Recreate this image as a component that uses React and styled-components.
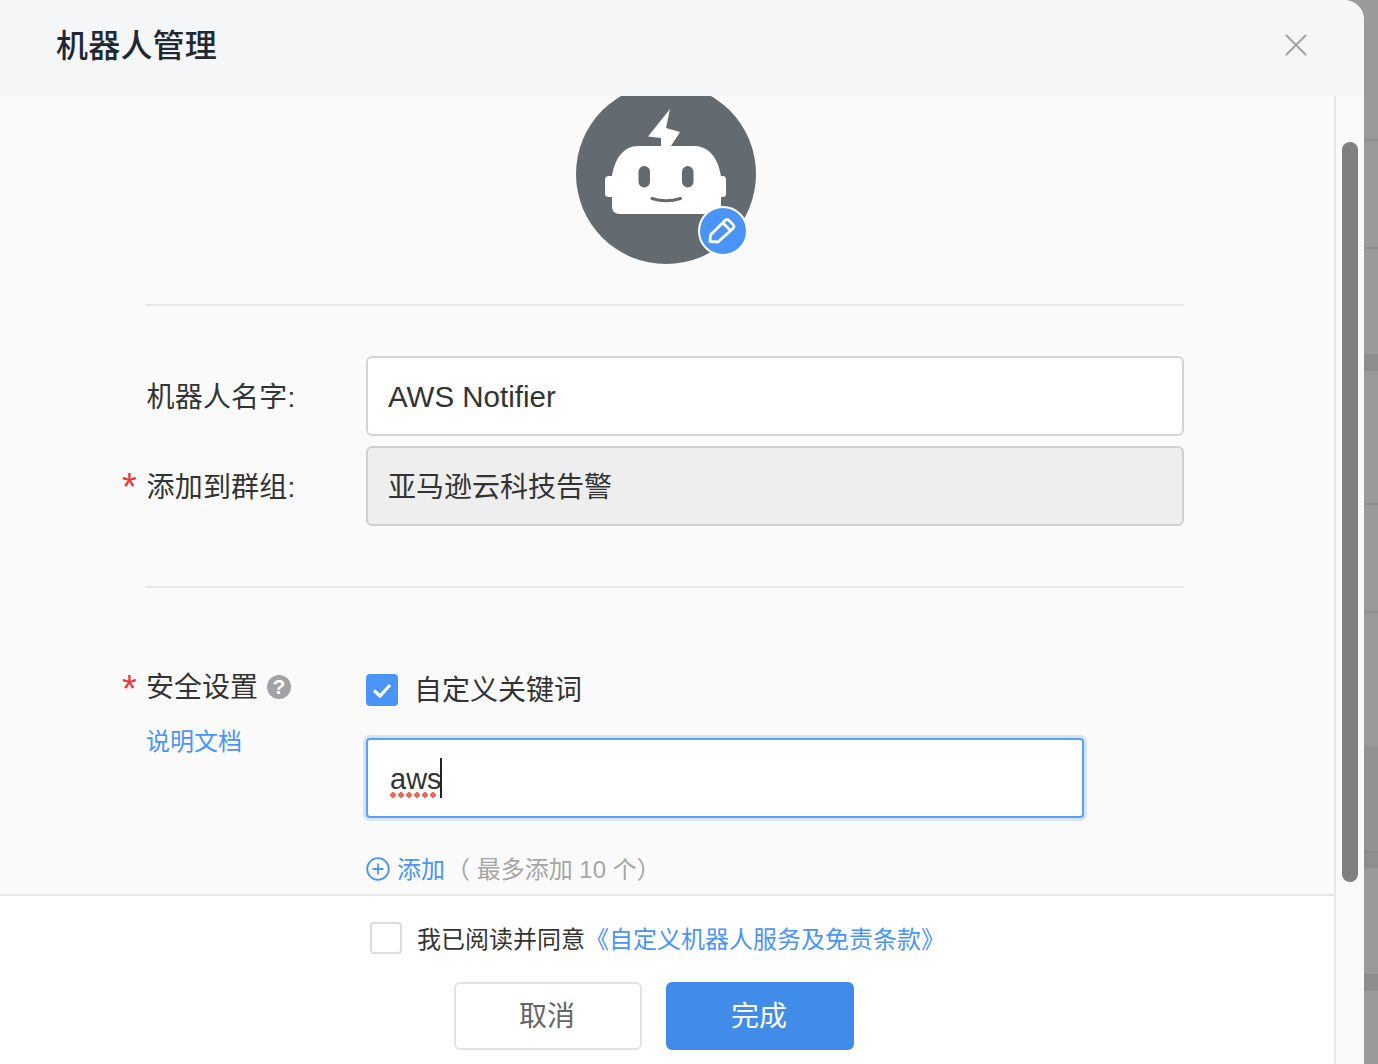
import React from "react";
import styled, { createGlobalStyle } from "styled-components";
import { X } from "lucide-react";

const GlobalStyle = createGlobalStyle`
  html, body {
    margin: 0;
    padding: 0;
    overflow: hidden;
  }
  body {
    font-family: "Liberation Sans", "Noto Sans CJK SC", sans-serif;
    color: #333;
  }
  * {
    box-sizing: border-box;
  }
`;

const Page = styled.div`
  display: flex;
  width: 1378px;
  height: 1064px;
  overflow: hidden;
  background: #9a9a9a;
`;

const Dialog = styled.div`
  display: flex;
  flex-direction: column;
  flex: 0 0 1364px;
  height: 1064px;
  overflow: hidden;
  border-top-right-radius: 20px;
  background: #fff;
`;

// the page behind the dialog, only a thin strip of it shows
const Backdrop = styled.div`
  display: flex;
  flex: 1;
  flex-direction: column;
`;

const Band = styled.div`
  height: ${(p) => p.$h}px;
  background: ${(p) => p.$color};
`;

const Header = styled.div`
  display: flex;
  flex: 0 0 96px;
  align-items: center;
  justify-content: space-between;
  padding: 0 49px 6px 56px;
  background: #f5f6f8;
`;

const Title = styled.div`
  padding-bottom: 4px;
  font-size: 32px;
  font-weight: 500;
  letter-spacing: 0.2px;
  color: #1f2933;
`;

const CloseButton = styled.div`
  display: flex;
  color: #a3a3a3;
`;

const DialogBody = styled.div`
  display: flex;
  flex: 1;
  min-height: 0;
`;

const Main = styled.div`
  display: flex;
  flex-direction: column;
  width: 1336px;
  border-right: 2px solid #e8e8e8;
`;

const ScrollTrack = styled.div`
  flex: 1;
  padding: 46px 4px 0 6px;
  background: #fafafa;
`;

const ScrollThumb = styled.div`
  width: 16px;
  height: 740px;
  border-radius: 8px;
  background: #808080;
`;

const Content = styled.div`
  flex: 0 0 800px;
  overflow: hidden;
  padding-left: 146px;
  background: #fafafa;
  border-bottom: 2px solid #e6e6e6;
`;

const AvatarWrap = styled.div`
  position: relative;
  width: 180px;
  height: 180px;
  margin: -12px 0 0 430px;
`;

const EditBadge = styled.div`
  position: absolute;
  left: 122px;
  top: 122px;
  display: flex;
  align-items: center;
  justify-content: center;
  width: 50px;
  height: 50px;
  border: 2px solid #fff;
  border-radius: 50%;
  background: #4a94f8;
`;

const Divider = styled.div`
  width: 1038px;
  height: 2px;
  margin-top: ${(p) => p.$top}px;
  background: #e6e6e6;
`;

const FieldRow = styled.div`
  display: flex;
  align-items: center;
  width: 1038px;
  height: 80px;
  margin-top: ${(p) => p.$top}px;
`;

const Label = styled.div`
  position: relative;
  flex: 0 0 220px;
  padding: 4px 0 0 0.5px;
  font-size: 28px;
  line-height: 40px;
  letter-spacing: 0.2px;
  color: #333;
`;

const Star = styled.span`
  position: absolute;
  left: -24px;
  top: ${(p) => p.$top}px;
  font-size: 38px;
  line-height: 40px;
  color: #e8393a;
`;

const TextInput = styled.div`
  flex: 1;
  height: 80px;
  padding-left: 20px;
  border: 2px solid #d4d4d4;
  border-radius: 6px;
  background: #fff;
  font-size: 29.5px;
  line-height: 78px;
  color: #333;
`;

const DisabledInput = styled(TextInput)`
  border-color: #d0d0d0;
  background: #eeeeee;
  font-size: 28px;
  line-height: 80px;
`;

const SecurityRow = styled.div`
  display: flex;
  width: 1038px;
  margin-top: 80px;
`;

const SecurityLabels = styled.div`
  flex: 0 0 220px;
`;

const LabelLine = styled(Label)`
  display: flex;
  align-items: center;
  height: 40px;
  padding: 0;
  letter-spacing: 0;
`;

const HelpIcon = styled.span`
  display: flex;
  align-items: center;
  justify-content: center;
  width: 24px;
  height: 24px;
  margin: -2px 0 0 9px;
  border-radius: 50%;
  background: #a0a2a6;
  color: #fff;
  font-size: 21px;
  font-weight: 700;
`;

const DocLink = styled.div`
  margin-top: 18px;
  font-size: 24px;
  line-height: 32px;
  color: #4a94f8;
`;

const SecurityFields = styled.div`
  display: flex;
  flex-direction: column;
`;

const CheckRow = styled.div`
  display: flex;
  align-items: center;
  gap: 16px;
  height: 40px;
  margin-top: 2px;
  font-size: 28px;
  color: #333;
`;

const CheckText = styled.span`
  margin-top: -4px;
`;

const CheckBox = styled.div`
  display: flex;
  flex: 0 0 32px;
  align-items: center;
  justify-content: center;
  height: 32px;
  border: 2px solid ${(p) => (p.$checked ? "#4a94f8" : "#dcdcdc")};
  border-radius: 4px;
  background: ${(p) => (p.$checked ? "#4a94f8" : "#fff")};
`;

const KeywordInput = styled.div`
  display: flex;
  align-items: center;
  width: 718px;
  height: 80px;
  margin-top: 28px;
  padding-left: 22px;
  border: 2px solid #5ba0f5;
  border-radius: 4px;
  background: #fff;
  box-shadow: 0 0 0 3px #d2e4fb;
  font-size: 29px;
  color: #333;
`;

const Keyword = styled.span`
  position: relative;
  padding-top: 2px;
  line-height: 40px;
`;

const SpellDots = styled.span`
  position: absolute;
  left: 0;
  top: 35px;
  width: 48px;
  height: 6px;
  background: radial-gradient(circle at 3px 3px, #ea6a60 2.6px, transparent 3px) 0 0 / 8px 6px repeat-x;
`;

const Caret = styled.span`
  width: 2px;
  height: 40px;
  margin-left: -2px;
  background: #222;
`;

const AddRow = styled.div`
  display: flex;
  align-items: center;
  height: 32px;
  margin-top: 33px;
  font-size: 24px;
  color: #4a94f8;
`;

const AddIcon = styled.svg`
  width: 24px;
  height: 24px;
  margin: 4px 7px 0 0;
`;

const AddHint = styled.span`
  margin-left: 1px;
  color: #a6a6a6;
`;

const Footer = styled.div`
  display: flex;
  flex: 1;
  flex-direction: column;
  align-items: center;
  padding-top: 26px;
  background: #fff;
`;

const AgreeRow = styled.div`
  display: flex;
  align-items: center;
  width: 600px;
  height: 32px;
  padding-left: 3px;
  font-size: 24px;
  color: #333;
`;

const AgreeText = styled.span`
  margin: -2px 0 0 15px;
  white-space: nowrap;
`;

const AgreeLink = styled.span`
  margin-top: -2px;
  white-space: nowrap;
  color: #4a94f8;
`;

const ButtonRow = styled.div`
  display: flex;
  gap: 24px;
  margin: 28px 0 0 -26px;
`;

const Button = styled.div`
  display: flex;
  align-items: center;
  justify-content: center;
  width: 188px;
  height: 68px;
  padding: 0 2px 4px 0;
  border: 2px solid ${(p) => (p.$primary ? "#408ce8" : "#e2e2e2")};
  border-radius: 6px;
  background: ${(p) => (p.$primary ? "#408ce8" : "#fff")};
  color: ${(p) => (p.$primary ? "#fff" : "#666")};
  font-size: 28px;
`;

const backdropBands = [
  [140, "#9a9a9a"],
  [2, "#8f8f8f"],
  [106, "#9a9a9a"],
  [2, "#8f8f8f"],
  [106, "#9a9a9a"],
  [17, "#8d8d8d"],
  [133, "#9a9a9a"],
  [2, "#8f8f8f"],
  [106, "#9a9a9a"],
  [2, "#8f8f8f"],
  [134, "#9a9a9a"],
  [106, "#929292"],
  [2, "#8a8a8a"],
  [15, "#8f8f8f"],
  [106, "#9a9a9a"],
  [18, "#8d8d8d"],
  [73, "#9a9a9a"],
];

const RobotAvatar = () => (
  <svg width="180" height="180" viewBox="0 0 180 180">
    <circle cx="90" cy="90" r="90" fill="#646b70" />
    <path d="M94 25 L90 44 L104 48 L95 62 L85 62 L85 54 L72 52.5 Z" fill="#fff" />
    <path
      d="M62 62 H118 C133 62 142 74 145 92 H147 Q150 92 150 96 V110 Q150 113 147 113 H145 V122 Q145 130 137 130 H44 Q36 130 36 122 V113 H33 Q29 113 29 110 V96 Q29 92 33 92 H36 C39 74 48 62 62 62 Z"
      fill="#fff"
    />
    <rect x="62.5" y="82" width="11.5" height="21.5" rx="5.7" fill="#646b70" />
    <rect x="106" y="82" width="11.5" height="21.5" rx="5.7" fill="#646b70" />
    <path d="M76 114.5 Q90 119 104.5 114.5" fill="none" stroke="#646b70" strokeWidth="3" strokeLinecap="round" />
  </svg>
);

const PencilIcon = () => (
  <svg width="30" height="30" viewBox="0 0 30 30">
    <path
      d="M2 25.5 L2.5 19 L17 4.5 Q19 2.5 21 4.5 L25 8.5 Q27 10.5 25 12.5 L10 26 Z M15 7 L22.5 14.5"
      fill="none"
      stroke="#fff"
      strokeWidth="2.8"
      strokeLinejoin="round"
    />
  </svg>
);

const App = () => {
  return (
    <Page>
      <GlobalStyle />
      <Dialog>
        <Header>
          <Title>机器人管理</Title>
          <CloseButton>
            <X size={38} strokeWidth={1.25} />
          </CloseButton>
        </Header>
        <DialogBody>
          <Main>
            <Content>
              <AvatarWrap>
                <RobotAvatar />
                <EditBadge>
                  <PencilIcon />
                </EditBadge>
              </AvatarWrap>
              <Divider $top={40} />
              <FieldRow $top={50}>
                <Label>机器人名字:</Label>
                <TextInput>AWS Notifier</TextInput>
              </FieldRow>
              <FieldRow $top={10}>
                <Label>
                  <Star $top={3}>*</Star>
                  添加到群组:
                </Label>
                <DisabledInput>亚马逊云科技告警</DisabledInput>
              </FieldRow>
              <Divider $top={60} />
              <SecurityRow>
                <SecurityLabels>
                  <LabelLine>
                    <Star $top={1}>*</Star>
                    安全设置
                    <HelpIcon>?</HelpIcon>
                  </LabelLine>
                  <DocLink>说明文档</DocLink>
                </SecurityLabels>
                <SecurityFields>
                  <CheckRow>
                    <CheckBox $checked>
                      <svg width="22" height="22" viewBox="0 0 22 22">
                        <path d="M3 11.5 L9 17 L19 6" fill="none" stroke="#fff" strokeWidth="3.2" />
                      </svg>
                    </CheckBox>
                    <CheckText>自定义关键词</CheckText>
                  </CheckRow>
                  <KeywordInput>
                    <Keyword>
                      aws
                      <SpellDots />
                    </Keyword>
                    <Caret />
                  </KeywordInput>
                  <AddRow>
                    <AddIcon viewBox="0 0 24 24">
                      <circle cx="12" cy="12" r="10.8" fill="none" stroke="#4a94f8" strokeWidth="1.8" />
                      <path d="M12 6.5 V17.5 M6.5 12 H17.5" fill="none" stroke="#4a94f8" strokeWidth="1.8" />
                    </AddIcon>
                    添加
                    <AddHint>（ 最多添加 10 个）</AddHint>
                  </AddRow>
                </SecurityFields>
              </SecurityRow>
            </Content>
            <Footer>
              <AgreeRow>
                <CheckBox />
                <AgreeText>我已阅读并同意</AgreeText>
                <AgreeLink>《自定义机器人服务及免责条款》</AgreeLink>
              </AgreeRow>
              <ButtonRow>
                <Button>取消</Button>
                <Button $primary>完成</Button>
              </ButtonRow>
            </Footer>
          </Main>
          <ScrollTrack>
            <ScrollThumb />
          </ScrollTrack>
        </DialogBody>
      </Dialog>
      <Backdrop>
        {backdropBands.map(([h, color], i) => (
          <Band key={i} $h={h} $color={color} />
        ))}
      </Backdrop>
    </Page>
  );
};

export default App;
